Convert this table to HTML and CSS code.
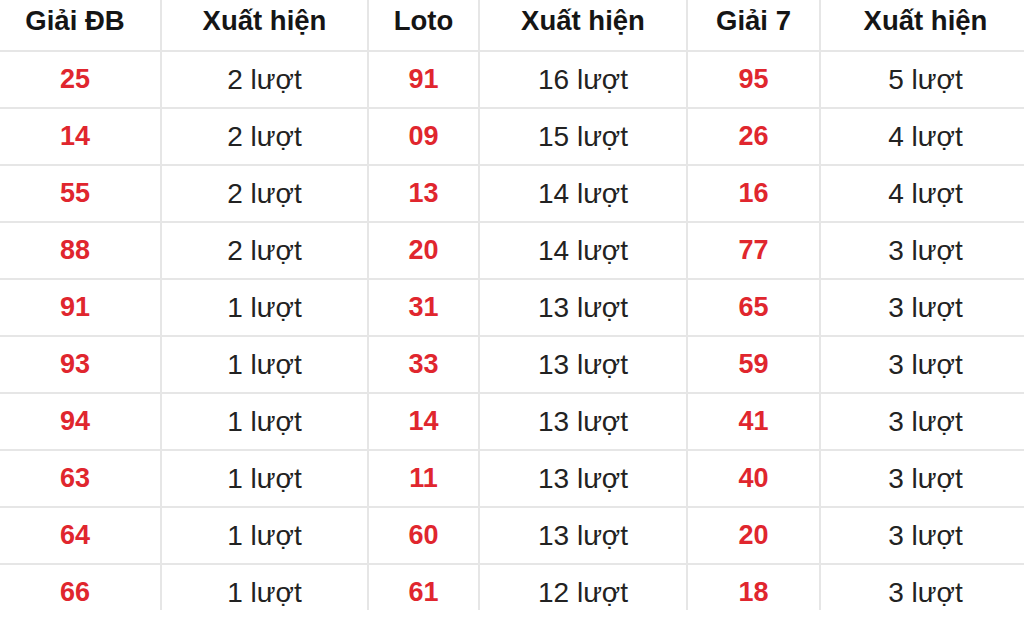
FILE: index.html
```html
<!DOCTYPE html>
<html lang="vi">
<head>
<meta charset="utf-8">
<link rel="stylesheet" href="styles.css">
</head>
<body>
<div class="frame">
<table class="stats">
  <colgroup>
    <col class="c1"><col class="c2"><col class="c3"><col class="c4"><col class="c5"><col class="c6">
  </colgroup>
  <thead>
    <tr><th>Giải ĐB</th><th>Xuất hiện</th><th>Loto</th><th>Xuất hiện</th><th>Giải 7</th><th>Xuất hiện</th></tr>
  </thead>
  <tbody>
    <tr><td class="num">25</td><td>2 lượt</td><td class="num">91</td><td>16 lượt</td><td class="num">95</td><td>5 lượt</td></tr>
    <tr><td class="num">14</td><td>2 lượt</td><td class="num">09</td><td>15 lượt</td><td class="num">26</td><td>4 lượt</td></tr>
    <tr><td class="num">55</td><td>2 lượt</td><td class="num">13</td><td>14 lượt</td><td class="num">16</td><td>4 lượt</td></tr>
    <tr><td class="num">88</td><td>2 lượt</td><td class="num">20</td><td>14 lượt</td><td class="num">77</td><td>3 lượt</td></tr>
    <tr><td class="num">91</td><td>1 lượt</td><td class="num">31</td><td>13 lượt</td><td class="num">65</td><td>3 lượt</td></tr>
    <tr><td class="num">93</td><td>1 lượt</td><td class="num">33</td><td>13 lượt</td><td class="num">59</td><td>3 lượt</td></tr>
    <tr><td class="num">94</td><td>1 lượt</td><td class="num">14</td><td>13 lượt</td><td class="num">41</td><td>3 lượt</td></tr>
    <tr><td class="num">63</td><td>1 lượt</td><td class="num">11</td><td>13 lượt</td><td class="num">40</td><td>3 lượt</td></tr>
    <tr><td class="num">64</td><td>1 lượt</td><td class="num">60</td><td>13 lượt</td><td class="num">20</td><td>3 lượt</td></tr>
    <tr><td class="num">66</td><td>1 lượt</td><td class="num">61</td><td>12 lượt</td><td class="num">18</td><td>3 lượt</td></tr>
  </tbody>
</table>
</div>
</body>
</html>
```
FILE: styles.css
```css
html, body {
  margin: 0;
  padding: 0;
  background: #ffffff;
}
body {
  width: 1024px;
  height: 618px;
  overflow: hidden;
  font-family: "Liberation Sans", Arial, sans-serif;
}
.frame {
  height: 610px;
  overflow: hidden;
  margin-left: -10px;
  width: 1040px;
}
.stats {
  border-collapse: collapse;
  table-layout: fixed;
  width: 1040px;
}
.c1 { width: 171px; }
.c2 { width: 207px; }
.c3 { width: 111px; }
.c4 { width: 208px; }
.c5 { width: 133px; }
.c6 { width: 210px; }
.stats th, .stats td {
  padding: 0;
  text-align: center;
  vertical-align: middle;
  border-left: 2px solid #e6e6e6;
  border-bottom: 2px solid #e6e6e6;
}
.stats th:first-child, .stats td:first-child {
  border-left: none;
}
.stats th {
  height: 51px;
  padding-bottom: 8px;
  box-sizing: border-box;
  font-size: 27.5px;
  font-weight: bold;
  color: #151515;
}
.stats td {
  height: 57px;
  box-sizing: border-box;
  font-size: 28px;
  color: #222222;
}
.stats td.num {
  font-size: 27px;
  font-weight: bold;
  color: #e0262e;
}
```
